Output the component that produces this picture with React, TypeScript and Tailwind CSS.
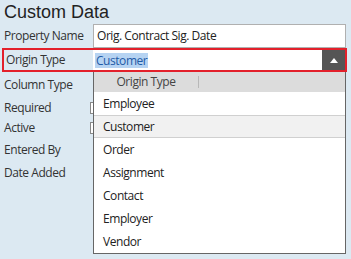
import React from "react";

const items = ["Employee", "Customer", "Order", "Assignment", "Contact", "Employer", "Vendor"];

export default function App() {
  const label = "text-[12px] text-[#333] leading-none";
  return (
    <div className="w-[351px] h-[259px] bg-[#dce9f2] overflow-hidden relative tracking-[-0.45px]" style={{ fontFamily: '"Open Sans", "Noto Sans", sans-serif' }}>
      <div className="h-[24px] pl-[4px] text-[18px] leading-[24px] text-[#222] tracking-normal" style={{ fontFamily: '"Liberation Sans", Arial, sans-serif' }}>
        Custom Data
      </div>
      {/* Property Name */}
      <div className="flex items-center h-[24px] pl-[4px]">
        <div className={`w-[89px] ${label}`}>Property Name</div>
        <div className="w-[253px] h-[24px] border border-[#b0b0b0] bg-white flex items-center pl-[3px] text-[12px] text-[#222]">
          Orig. Contract Sig. Date
        </div>
      </div>
      {/* Origin Type */}
      <div className="relative">
        <div className="ml-[2px] w-[345px] h-[24px] border-2 border-[#e3202b] flex items-center">
          <div className={`w-[89px] pl-[2px] ${label}`}>Origin Type</div>
          <div className="flex-1 h-full bg-white flex items-center pl-[2px]">
            <span className="bg-[#b6d3f2] text-[#1f5aa6] text-[12px] leading-[15px] px-[1px]">Customer</span>
          </div>
          <div className="w-[23px] h-full bg-[#555555] flex items-center justify-center">
            <svg width="8" height="5" viewBox="0 0 8 5"><polygon points="4,0 8,5 0,5" fill="#ffffff" /></svg>
          </div>
        </div>
        {/* dropdown */}
        <div className="absolute left-[93px] top-[24px] w-[253px] bg-white border-x border-b border-[#666] z-10">
          <div className="h-[20px] bg-[#dcdcdc] flex items-center relative">
            <div className="w-[104px] text-center text-[12px] text-[#444]">Origin Type</div>
            <div className="w-px h-[12px] bg-[#b8b8b8]" />
          </div>
          {items.map((it) => (
            <div
              key={it}
              className={`h-[23px] flex items-center pl-[9px] text-[12px] text-[#222] ${it === "Customer" ? "bg-[#f1f1f1] border-y border-[#d0d0d0]" : ""}`}
            >
              {it}
            </div>
          ))}
        </div>
      </div>
      {/* other labels */}
      <div className="pl-[4px]">
        <div className="h-[26px] flex items-center"><div className={label}>Column Type</div></div>
        <div className="h-[20px] flex items-center">
          <div className={`w-[86px] ${label}`}>Required</div>
          <div className="w-[12px] h-[12px] border border-[#888] bg-white" />
        </div>
        <div className="h-[20px] flex items-center">
          <div className={`w-[86px] ${label}`}>Active</div>
          <div className="w-[12px] h-[12px] border border-[#888] bg-white" />
        </div>
        <div className="h-[23px] flex items-center"><div className={label}>Entered By</div></div>
        <div className="h-[23px] flex items-center"><div className={label}>Date Added</div></div>
      </div>
    </div>
  );
}
